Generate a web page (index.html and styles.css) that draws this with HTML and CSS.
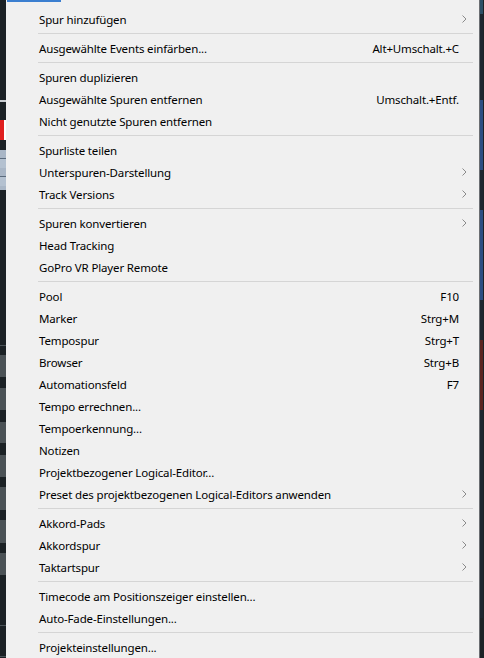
FILE: index.html
```html
<!DOCTYPE html>
<html lang="de">
<head>
<meta charset="utf-8">
<link rel="stylesheet" href="styles.css">
</head>
<body>
<div class="screen">
  <div class="left-strip">
    <div class="ls ls-dark" style="height:95px"></div>
    <div class="ls ls-text" style="height:12px"></div>
    <div class="ls ls-dark" style="height:13px"></div>
    <div class="ls ls-red" style="height:20px"></div>
    <div class="ls ls-dark" style="height:10px"></div>
    <div class="ls ls-blue" style="height:40px"></div>
    <div class="ls ls-dark" style="height:125px"></div>
    <div class="ls ls-lined" style="height:40px"></div>
    <div class="ls ls-grey" style="height:22px"></div>
    <div class="ls ls-dark" style="height:11px"></div>
    <div class="ls ls-grey" style="height:22px"></div>
    <div class="ls ls-dark" style="height:12px"></div>
    <div class="ls ls-grey" style="height:21px"></div>
    <div class="ls ls-dark" style="height:12px"></div>
    <div class="ls ls-grey" style="height:22px"></div>
    <div class="ls ls-dark" style="height:10px"></div>
    <div class="ls ls-grey" style="height:23px"></div>
    <div class="ls ls-dark" style="height:10px"></div>
    <div class="ls ls-grey" style="height:23px"></div>
    <div class="ls ls-dark" style="height:10px"></div>
    <div class="ls ls-grey" style="height:22px"></div>
    <div class="ls ls-dark" style="height:20px"></div>
    <div class="ls ls-lined" style="height:63px"></div>
  </div>

  <div class="menu">
    <div class="top-highlight"></div>
    <div class="item"><span class="label">Spur hinzufügen</span><span class="arrow"><svg viewBox="0 0 5 8" width="5" height="8"><polyline points="0.5,0.5 4,4 0.5,7.5"/></svg></span></div>
    <div class="sep"></div>
    <div class="item"><span class="label">Ausgewählte Events einfärben...</span><span class="key">Alt+Umschalt.+C</span></div>
    <div class="sep"></div>
    <div class="item"><span class="label">Spuren duplizieren</span></div>
    <div class="item"><span class="label">Ausgewählte Spuren entfernen</span><span class="key">Umschalt.+Entf.</span></div>
    <div class="item"><span class="label">Nicht genutzte Spuren entfernen</span></div>
    <div class="sep"></div>
    <div class="item"><span class="label">Spurliste teilen</span></div>
    <div class="item"><span class="label">Unterspuren-Darstellung</span><span class="arrow"><svg viewBox="0 0 5 8" width="5" height="8"><polyline points="0.5,0.5 4,4 0.5,7.5"/></svg></span></div>
    <div class="item"><span class="label">Track Versions</span><span class="arrow"><svg viewBox="0 0 5 8" width="5" height="8"><polyline points="0.5,0.5 4,4 0.5,7.5"/></svg></span></div>
    <div class="sep"></div>
    <div class="item"><span class="label">Spuren konvertieren</span><span class="arrow"><svg viewBox="0 0 5 8" width="5" height="8"><polyline points="0.5,0.5 4,4 0.5,7.5"/></svg></span></div>
    <div class="item"><span class="label">Head Tracking</span></div>
    <div class="item"><span class="label">GoPro VR Player Remote</span></div>
    <div class="sep"></div>
    <div class="item"><span class="label">Pool</span><span class="key">F10</span></div>
    <div class="item"><span class="label">Marker</span><span class="key">Strg+M</span></div>
    <div class="item"><span class="label">Tempospur</span><span class="key">Strg+T</span></div>
    <div class="item"><span class="label">Browser</span><span class="key">Strg+B</span></div>
    <div class="item"><span class="label">Automationsfeld</span><span class="key">F7</span></div>
    <div class="item"><span class="label">Tempo errechnen...</span></div>
    <div class="item"><span class="label">Tempoerkennung...</span></div>
    <div class="item"><span class="label">Notizen</span></div>
    <div class="item"><span class="label">Projektbezogener Logical-Editor...</span></div>
    <div class="item"><span class="label">Preset des projektbezogenen Logical-Editors anwenden</span><span class="arrow"><svg viewBox="0 0 5 8" width="5" height="8"><polyline points="0.5,0.5 4,4 0.5,7.5"/></svg></span></div>
    <div class="sep"></div>
    <div class="item"><span class="label">Akkord-Pads</span><span class="arrow"><svg viewBox="0 0 5 8" width="5" height="8"><polyline points="0.5,0.5 4,4 0.5,7.5"/></svg></span></div>
    <div class="item"><span class="label">Akkordspur</span><span class="arrow"><svg viewBox="0 0 5 8" width="5" height="8"><polyline points="0.5,0.5 4,4 0.5,7.5"/></svg></span></div>
    <div class="item"><span class="label">Taktartspur</span><span class="arrow"><svg viewBox="0 0 5 8" width="5" height="8"><polyline points="0.5,0.5 4,4 0.5,7.5"/></svg></span></div>
    <div class="sep"></div>
    <div class="item"><span class="label">Timecode am Positionszeiger einstellen...</span></div>
    <div class="item"><span class="label">Auto-Fade-Einstellungen...</span></div>
    <div class="sep"></div>
    <div class="item"><span class="label">Projekteinstellungen...</span></div>
  </div>

  <div class="right-strip">
    <div class="rs rs-teal" style="height:14px"></div>
    <div class="rs rs-dark" style="height:86px"></div>
    <div class="rs rs-blue" style="height:70px"></div>
    <div class="rs rs-dark" style="height:40px"></div>
    <div class="rs rs-blue" style="height:90px"></div>
    <div class="rs rs-dark" style="height:40px"></div>
    <div class="rs rs-maroon" style="height:70px"></div>
    <div class="rs rs-dark" style="height:208px"></div>
  </div>
</div>
</body>
</html>
```

FILE: styles.css
```css
html, body {
  margin: 0;
  padding: 0;
  background: #1c2226;
  width: 484px;
  height: 658px;
  overflow: hidden;
}

.screen {
  display: flex;
  width: 484px;
  height: 658px;
}

.left-strip {
  width: 6px;
  flex: none;
  display: flex;
  flex-direction: column;
}

.ls { width: 6px; flex: none; }
.ls-dark { background: #1b2125; }
.ls-text { background: linear-gradient(#1b2125 0 40%, #c8ccd0 40% 60%, #1b2125 60%); }
.ls-red { background: linear-gradient(90deg, #e01f1f 0 65%, #ffffff 65%); }
.ls-blue { background: repeating-linear-gradient(#a9b6c6 0 8px, #5a6a7c 8px 9px, #b4c1d0 9px 18px); }
.ls-lined { background: repeating-linear-gradient(#1b2125 0 30px, #4a5358 30px 31px); }
.ls-grey { background: #4b5256; }

.right-strip {
  width: 4px;
  flex: none;
  display: flex;
  flex-direction: column;
  border-left: 1px solid #6b6e72;
}

.rs { width: 3px; flex: none; }
.rs-teal { background: #2d4f66; }
.rs-dark { background: #1d2630; }
.rs-blue { background: #2c4e82; }
.rs-maroon { background: #5a2420; }

.menu {
  position: relative;
  width: 473px;
  flex: none;
  background: #f0f0f0;
  padding-top: 8px;
  box-sizing: border-box;
  font-family: "Noto Sans", "Open Sans", sans-serif;
  font-size: 11.5px;
  letter-spacing: -0.15px;
  color: #000;
}

.top-highlight {
  position: absolute;
  top: 0;
  left: 1px;
  width: 54px;
  height: 2px;
  background: #3b7fd0;
}

.item {
  height: 22px;
  display: flex;
  align-items: center;
  padding-left: 33px;
  padding-right: 12px;
}

.label {
  flex: 1;
  white-space: nowrap;
}

.key {
  padding-right: 8px;
  white-space: nowrap;
}

.arrow {
  width: 6px;
  display: flex;
  align-items: center;
  justify-content: flex-end;
}

.arrow svg polyline {
  fill: none;
  stroke: #8a8a8a;
  stroke-width: 1;
}

.sep {
  height: 7px;
  display: flex;
  align-items: center;
  padding-left: 32px;
  padding-right: 6px;
}

.sep::before {
  content: "";
  display: block;
  flex: 1;
  height: 1px;
  background: #d5d5d5;
}
```
